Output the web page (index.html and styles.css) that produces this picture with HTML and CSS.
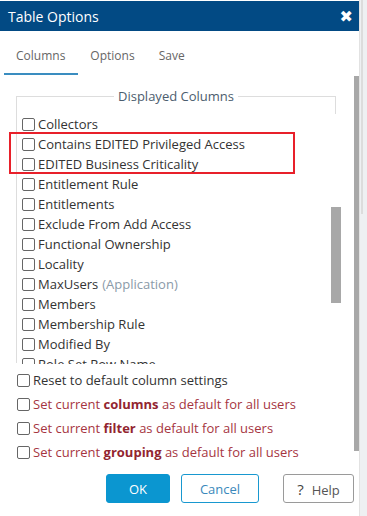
FILE: index.html
```html
<!DOCTYPE html>
<html lang="en">
<head>
    <meta charset="UTF-8">
    <title>Table Options</title>
    <link rel="stylesheet" href="styles.css">
</head>
<body>
    <div class="dialog">
        <div class="titulo">
            <span>Table Options</span>
            <span class="fechar">&#10006;</span>
        </div>
        <div class="corpo">
            <div class="conteudo">
                <div class="abas">
                    <span class="aba ativa">Columns</span>
                    <span class="aba">Options</span>
                    <span class="aba">Save</span>
                </div>

                <fieldset class="colunas">
                    <legend>Displayed Columns</legend>
                    <div class="lista-wrap">
                        <div class="lista">
                            <label class="item"><span class="caixa"></span>Collectors</label>
                            <label class="item"><span class="caixa"></span>Contains EDITED Privileged Access</label>
                            <label class="item"><span class="caixa"></span>EDITED Business Criticality</label>
                            <label class="item"><span class="caixa"></span>Entitlement Rule</label>
                            <label class="item"><span class="caixa"></span>Entitlements</label>
                            <label class="item"><span class="caixa"></span>Exclude From Add Access</label>
                            <label class="item"><span class="caixa"></span>Functional Ownership</label>
                            <label class="item"><span class="caixa"></span>Locality</label>
                            <label class="item"><span class="caixa"></span>MaxUsers <span class="cinza">(Application)</span></label>
                            <label class="item"><span class="caixa"></span>Members</label>
                            <label class="item"><span class="caixa"></span>Membership Rule</label>
                            <label class="item"><span class="caixa"></span>Modified By</label>
                            <label class="item"><span class="caixa"></span>Role Set Row Name</label>
                        </div>
                        <div class="barra-interna"><div class="polegar"></div></div>
                    </div>
                    <div class="destaque"></div>
                </fieldset>

                <div class="opcoes">
                    <label class="opcao"><span class="caixa"></span>Reset to default column settings</label>
                    <label class="opcao vermelho"><span class="caixa"></span>Set current&nbsp;<b>columns</b>&nbsp;as default for all users</label>
                    <label class="opcao vermelho"><span class="caixa"></span>Set current&nbsp;<b>filter</b>&nbsp;as default for all users</label>
                    <label class="opcao vermelho"><span class="caixa"></span>Set current&nbsp;<b>grouping</b>&nbsp;as default for all users</label>
                </div>

                <div class="botoes">
                    <button class="btn ok">OK</button>
                    <button class="btn cancelar">Cancel</button>
                    <button class="btn ajuda"><span class="interrogacao">?</span>Help</button>
                </div>
            </div>
            <div class="barra-externa"><div class="polegar"></div></div>
        </div>
    </div>
    <div class="pagina-barra"><div class="pagina-polegar"></div></div>
</body>
</html>
```

FILE: styles.css
```css
body{
    margin: 0;
    display: flex;
    height: 516px;
    overflow: hidden;
    font-family: "Open Sans", "DejaVu Sans", sans-serif;
    background-color: #fff;
}
.dialog{
    width: 359px;
    display: flex;
    flex-direction: column;
    background-color: #fff;
}
.titulo{
    height: 30px;
    margin-top: 1px;
    background-color: #024a84;
    color: white;
    font-size: 14px;
    display: flex;
    align-items: center;
    justify-content: space-between;
    padding: 0 6px 0 8px;
}
.fechar{
    font-size: 16px;
    font-weight: bold;
    font-family: "DejaVu Sans", sans-serif;
}
.corpo{
    flex: 1;
    display: flex;
}
.conteudo{
    flex: 1;
    position: relative;
}
.barra-externa{
    width: 10px;
    padding-top: 45px;
}
.barra-externa .polegar{
    height: 375px;
    background-color: #a8a8a8;
}
.abas{
    display: flex;
    margin: 9px 0 0 4px;
}
.aba{
    padding: 7px 12px 9px;
    font-size: 12px;
    color: #666;
    border-bottom: 2px solid transparent;
}
.aba.ativa{
    border-bottom-color: #3a8dc0;
    padding-left: 12px;
    padding-right: 13px;
}
.colunas{
    position: relative;
    margin: 12px 0 0 16px;
    width: 320px;
    box-sizing: border-box;
    border: 1px solid #ddd;
    padding: 0;
    height: 276px;
}
.colunas legend{
    margin: 0 auto;
    padding: 0 4px;
    font-size: 13px;
    color: #4c5d6e;
}
.lista-wrap{
    display: flex;
    margin-top: 9px;
    margin-right: -6px;
    height: 250px;
    background-color: #fff;
    position: relative;
}
.lista{
    flex: 1;
    overflow: hidden;
    padding-left: 5px;
}
.barra-interna{
    width: 10px;
    padding-top: 93px;
}
.barra-interna .polegar{
    height: 96px;
    background-color: #a8a8a8;
}
.item, .opcao{
    display: flex;
    align-items: center;
    height: 20px;
    font-size: 13px;
    color: #333;
    white-space: nowrap;
}
.caixa{
    width: 11px;
    height: 11px;
    border: 1px solid #666;
    border-radius: 2px;
    margin-right: 3px;
    flex-shrink: 0;
}
.cinza{
    color: #8a9aa8;
    margin-left: 4px;
}
.destaque{
    position: absolute;
    left: -8px;
    top: 27px;
    width: 282px;
    height: 38px;
    border: 2px solid #e8202a;
}
.opcoes{
    margin: 5px 0 0 17px;
}
.opcao{
    height: 24px;
}
.vermelho{
    color: #a6353f;
}
.vermelho b{
    color: #922530;
}
.botoes{
    display: flex;
    margin: 10px 0 0 106px;
}
.btn{
    height: 29px;
    border-radius: 3px;
    font-family: "Open Sans", sans-serif;
    font-size: 13px;
    background-color: #fff;
}
.ok{
    width: 64px;
    border: 1px solid #0b96d0;
    background-color: #0b96d0;
    color: white;
}
.cancelar{
    width: 78px;
    margin-left: 11px;
    border: 1px solid #1898d0;
    color: #3a88bb;
}
.ajuda{
    width: 71px;
    margin-left: 24px;
    border: 1px solid #9a9a9a;
    color: #555;
}
.interrogacao{
    font-size: 15px;
    margin-right: 8px;
    color: #444;
}
.pagina-barra{
    width: 8px;
    background-color: #eef0f2;
    border-left: 1px solid #e2e2e2;
}
.pagina-polegar{
    width: 2px;
    height: 214px;
    margin-left: 1px;
    background-color: #dcdcdc;
}
```
